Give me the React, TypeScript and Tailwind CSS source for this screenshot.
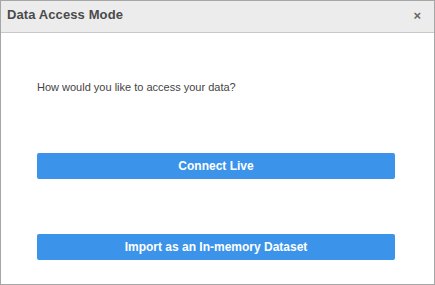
export default function App() {
  return (
    <div className="w-[435px] h-[285px] bg-white border border-[#a6a6a6] flex flex-col font-['Liberation_Sans',Arial,sans-serif]">
      <div className="h-[32px] shrink-0 bg-[#ececec] border-b border-[#c8c8c8] flex items-start justify-between pl-[6px] pr-[13px]">
        <span className="text-[13px] font-semibold text-[#4a4a4a] mt-[4px] tracking-[0.1px]">Data Access Mode</span>
        <span className="text-[13px] font-bold text-[#666] leading-none mt-[8px]">×</span>
      </div>
      <div className="flex flex-col px-[36px]">
        <p className="text-[11px] text-[#444] mt-[46px]">How would you like to access your data?</p>
        <button className="mt-[57px] h-[26px] w-[358px] bg-[#3b93ea] rounded-[2px] text-white text-[12px] font-bold">
          Connect Live
        </button>
        <button className="mt-[55px] h-[26px] w-[358px] bg-[#3b93ea] rounded-[2px] text-white text-[12px] font-bold">
          Import as an In-memory Dataset
        </button>
      </div>
    </div>
  );
}
